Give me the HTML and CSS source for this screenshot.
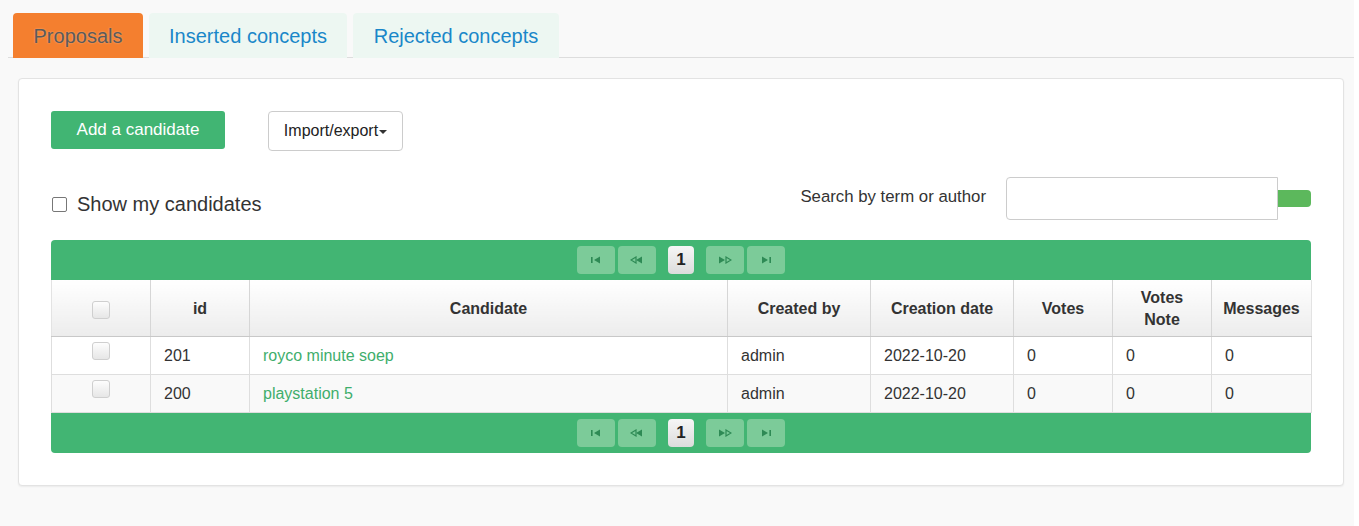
FILE: index.html
```html
<!DOCTYPE html>
<html>
<head>
<meta charset="utf-8">
<link rel="stylesheet" href="styles.css">
</head>
<body>
<div class="page">
  <ul class="tabs">
    <li class="tab active">Proposals</li>
    <li class="tab">Inserted concepts</li>
    <li class="tab">Rejected concepts</li>
  </ul>
  <div class="panel">
    <div class="actions">
      <button class="btn-add">Add a candidate</button>
      <button class="btn-import">Import/export<span class="caret"></span></button>
    </div>
    <div class="filters">
      <label class="mine"><span class="cbox"></span>Show my candidates</label>
      <div class="search">
        <span class="search-label">Search by term or author</span>
        <span class="search-input"></span>
        <span class="search-btn"></span>
      </div>
    </div>
    <div class="grid">
      <div class="pager top">
        <span class="pbtn"><svg viewBox="0 0 12 8" width="12" height="8"><rect x="1" y="1" width="1.6" height="6" fill="#2e8a55"/><path d="M4 4 L10 0.5 L10 7.5 Z" fill="#2e8a55"/></svg></span>
        <span class="pbtn"><svg viewBox="0 0 14 8" width="14" height="8"><path d="M1 4 L6 1 L6 7 Z" fill="none" stroke="#2e8a55" stroke-width="1.2"/><path d="M6 4 L12 0.5 L12 7.5 Z" fill="#2e8a55"/></svg></span>
        <span class="pnum">1</span>
        <span class="pbtn"><svg viewBox="0 0 14 8" width="14" height="8"><path d="M1 0.5 L7 4 L1 7.5 Z" fill="#2e8a55"/><path d="M8 1 L13 4 L8 7 Z" fill="none" stroke="#2e8a55" stroke-width="1.2"/></svg></span>
        <span class="pbtn"><svg viewBox="0 0 12 8" width="12" height="8"><path d="M2 0.5 L8 4 L2 7.5 Z" fill="#2e8a55"/><rect x="9.4" y="1" width="1.6" height="6" fill="#2e8a55"/></svg></span>
      </div>
      <table class="list">
        <colgroup>
          <col class="c-chk"><col class="c-id"><col class="c-cand"><col class="c-by"><col class="c-date"><col class="c-votes"><col class="c-note"><col class="c-msg">
        </colgroup>
        <thead>
          <tr>
            <th class="chk"><span class="rbox"></span></th>
            <th>id</th>
            <th>Candidate</th>
            <th>Created by</th>
            <th>Creation date</th>
            <th>Votes</th>
            <th>Votes<br>Note</th>
            <th>Messages</th>
          </tr>
        </thead>
        <tbody>
          <tr>
            <td class="chk"><span class="rbox"></span></td>
            <td>201</td>
            <td><a class="cand">royco minute soep</a></td>
            <td>admin</td>
            <td>2022-10-20</td>
            <td>0</td>
            <td>0</td>
            <td>0</td>
          </tr>
          <tr class="alt">
            <td class="chk"><span class="rbox"></span></td>
            <td>200</td>
            <td><a class="cand">playstation 5</a></td>
            <td>admin</td>
            <td>2022-10-20</td>
            <td>0</td>
            <td>0</td>
            <td>0</td>
          </tr>
        </tbody>
      </table>
      <div class="pager bottom">
        <span class="pbtn"><svg viewBox="0 0 12 8" width="12" height="8"><rect x="1" y="1" width="1.6" height="6" fill="#2e8a55"/><path d="M4 4 L10 0.5 L10 7.5 Z" fill="#2e8a55"/></svg></span>
        <span class="pbtn"><svg viewBox="0 0 14 8" width="14" height="8"><path d="M1 4 L6 1 L6 7 Z" fill="none" stroke="#2e8a55" stroke-width="1.2"/><path d="M6 4 L12 0.5 L12 7.5 Z" fill="#2e8a55"/></svg></span>
        <span class="pnum">1</span>
        <span class="pbtn"><svg viewBox="0 0 14 8" width="14" height="8"><path d="M1 0.5 L7 4 L1 7.5 Z" fill="#2e8a55"/><path d="M8 1 L13 4 L8 7 Z" fill="none" stroke="#2e8a55" stroke-width="1.2"/></svg></span>
        <span class="pbtn"><svg viewBox="0 0 12 8" width="12" height="8"><path d="M2 0.5 L8 4 L2 7.5 Z" fill="#2e8a55"/><rect x="9.4" y="1" width="1.6" height="6" fill="#2e8a55"/></svg></span>
      </div>
    </div>
  </div>
</div>
</body>
</html>
```
FILE: styles.css
```css
html, body {
  margin: 0;
  padding: 0;
  background: #ffffff;
}
body {
  font-family: "Liberation Sans", Arial, sans-serif;
  color: #333;
}
.page {
  width: 1354px;
  height: 526px;
  box-sizing: border-box;
  background: #f9f9f9;
  padding: 13px 0 0 8px;
}
.tabs {
  list-style: none;
  margin: 0;
  padding: 0 0 0 5px;
  display: flex;
  gap: 6px;
  border-bottom: 1px solid #dddddd;
  height: 44px;
}
.tab {
  height: 45px;
  box-sizing: border-box;
  font-size: 20px;
  color: #1a87c9;
  background: #edf7f2;
  border-radius: 4px 4px 0 0;
  text-align: center;
  padding: 12px 0 0;
}
.tab:nth-child(2) { width: 198px; }
.tab:nth-child(3) { width: 206px; }
.tab.active {
  width: 130px;
  background: #f47f2f;
  color: #5a5a5a;
  text-shadow: 0 0 2px rgba(255,255,255,0.4);
}
.panel {
  margin: 20px 10px 0 10px;
  height: 408px;
  box-sizing: border-box;
  background: #fff;
  border: 1px solid #e3e3e3;
  border-radius: 4px;
  box-shadow: 0 1px 2px rgba(0,0,0,0.06);
  padding: 32px 32px 0 32px;
}
.actions {
  display: flex;
  align-items: flex-start;
  gap: 43px;
}
button {
  font-family: "Liberation Sans", Arial, sans-serif;
  cursor: pointer;
}
.btn-add {
  width: 174px;
  height: 38px;
  border: none;
  border-radius: 3px;
  background: #41b573;
  color: #fff;
  font-size: 17px;
  padding: 0;
}
.btn-import {
  width: 135px;
  height: 40px;
  border: 1px solid #cccccc;
  border-radius: 4px;
  background: #fff;
  color: #222;
  font-size: 16px;
  padding: 0;
}
.caret {
  display: inline-block;
  width: 0;
  height: 0;
  border-left: 4px solid transparent;
  border-right: 4px solid transparent;
  border-top: 4px solid #333;
  vertical-align: middle;
  margin-left: 1px;
}
.filters {
  display: flex;
  justify-content: space-between;
  align-items: flex-start;
  margin-top: 26px;
  height: 63px;
}
.mine {
  display: flex;
  align-items: center;
  font-size: 20px;
  color: #333;
  margin-top: 16px;
}
.cbox {
  width: 13px;
  height: 13px;
  border: 1.5px solid #777;
  border-radius: 2px;
  margin: 0 10px 0 1px;
  background: #fff;
}
.search {
  display: flex;
  align-items: center;
}
.search-label {
  font-size: 16.8px;
  color: #333;
  margin-right: 20px;
  margin-bottom: 4px;
}
.search-input {
  width: 272px;
  height: 43px;
  box-sizing: border-box;
  border: 1px solid #cccccc;
  border-radius: 4px 0 0 4px;
  background: #fff;
}
.search-btn {
  width: 33px;
  height: 17px;
  background: #5cb85c;
  border-radius: 0 4px 4px 0;
}
.grid {
  width: 1260px;
}
.pager {
  height: 40px;
  background: #42b573;
  display: flex;
  align-items: center;
  justify-content: center;
  gap: 3px;
}
.pager.top { border-radius: 4px 4px 0 0; }
.pager.bottom { border-radius: 0 0 4px 4px; }
.pbtn {
  width: 38px;
  height: 28px;
  background: #7ccb99;
  border-radius: 4px;
  display: flex;
  align-items: center;
  justify-content: center;
}
.pnum {
  width: 26px;
  height: 28px;
  background: linear-gradient(#f6f6f6, #dcdcdc);
  border-radius: 4px;
  font-size: 17px;
  font-weight: bold;
  color: #222;
  display: flex;
  align-items: center;
  justify-content: center;
  margin: 0 9px;
}
.list {
  width: 1260px;
  border-collapse: collapse;
  table-layout: fixed;
  font-size: 16px;
}
.c-chk { width: 99px; }
.c-id { width: 99px; }
.c-cand { width: 478px; }
.c-by { width: 143px; }
.c-date { width: 143px; }
.c-votes { width: 99px; }
.c-note { width: 99px; }
.c-msg { width: 100px; }
.list th {
  height: 56px;
  box-sizing: border-box;
  padding: 2px 4px 0;
  font-weight: bold;
  font-size: 16px;
  line-height: 22px;
  color: #333;
  text-align: center;
  background: linear-gradient(#ffffff, #ececec);
  border-left: 1px solid #d6d6d6;
  border-bottom: 1px solid #c8c8c8;
}
.list th:first-child { border-left: 1px solid #e3e3e3; }
.list th:last-child { border-right: 1px solid #e3e3e3; }
.list td {
  height: 38px;
  box-sizing: border-box;
  padding: 2px 13px 0;
  color: #333;
  border-left: 1px solid #dedede;
  border-bottom: 1px solid #dedede;
  background: #fff;
}
.list td:last-child { border-right: 1px solid #dedede; }
.list tr.alt td { background: #f9f9f9; }
.list td.chk { text-align: center; padding: 0; }
.rbox {
  display: inline-block;
  width: 18px;
  height: 18px;
  box-sizing: border-box;
  border: 1px solid #cfcfcf;
  border-radius: 3px;
  background: linear-gradient(#fdfdfd, #e6e6e6);
  vertical-align: middle;
}
.list td.chk .rbox { margin-top: -10px; }
.cand {
  color: #3fae6c;
  text-decoration: none;
}
```
